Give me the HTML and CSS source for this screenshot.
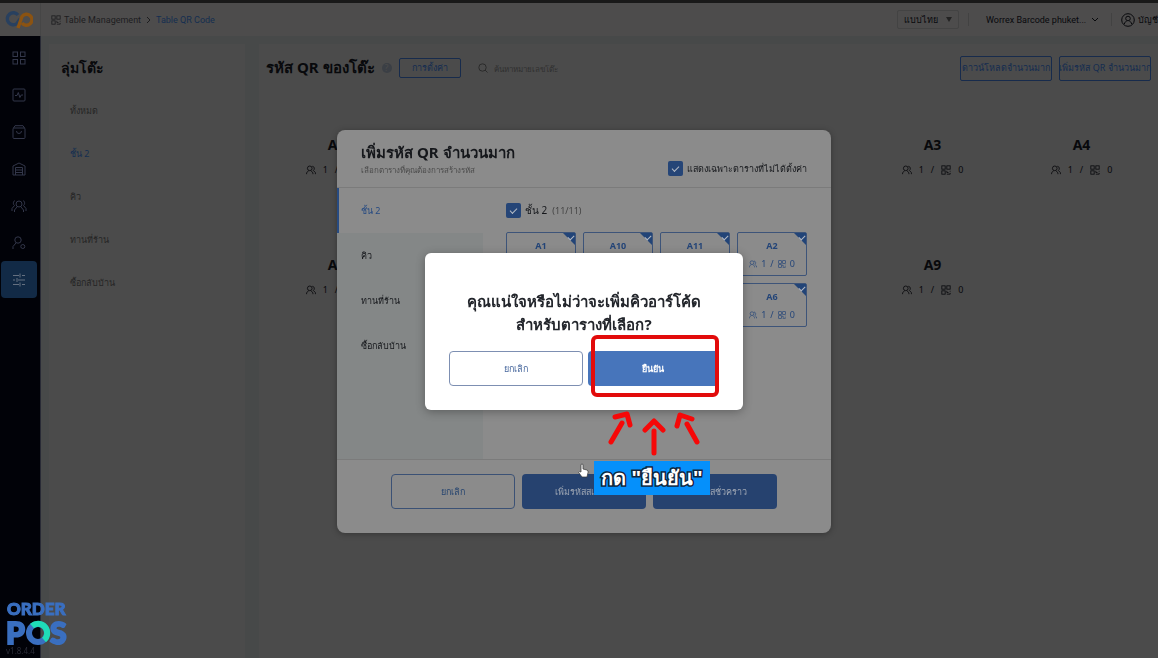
FILE: index.html
```html
<!DOCTYPE html>
<html lang="th">
<head>
  <meta charset="utf-8">
  <title>Table QR Code</title>
  <link rel="stylesheet" href="styles.css">
</head>
<body>
  <svg class="sprite" aria-hidden="true">
    <symbol id="people" viewBox="0 0 12 12">
      <circle cx="4.5" cy="4" r="2.8"/><path d="M.7 11V9.5L3 6.8M8.3 11V9.5L6 6.8M7.5 1.5a2.7 2.7 0 0 1 1.2 5L11.3 9v2"/>
    </symbol>
    <symbol id="qr" viewBox="0 0 12 12">
      <rect x="1" y="1" width="4" height="4"/><rect x="7" y="1" width="4" height="4"/><rect x="1" y="7" width="4" height="4"/><path d="M7 7v2h2M11 7v1M7 11h4V9.5"/>
    </symbol>
  </svg>

  <header class="topbar">
    <a class="brand" href="#" aria-label="Home">
      <svg width="28" height="20" viewBox="0 0 28 20" fill="none" stroke-width="3.4">
        <path d="M13 5A6 6 0 1 0 12 13.500L15 9" stroke="#28405f"/>
        <path d="M13 18L17 6.500A5.500 5.500 0 1 1 17 13" stroke="#8b5312"/>
      </svg>
    </a>
    <nav class="breadcrumb">
      <svg class="line-icon" width="10" height="10"><use href="#qr"/></svg>
      <a href="#">Table Management</a>
      <svg class="line-icon" width="5" height="8" viewBox="0 0 5 8"><path d="M1 1l3 3-3 3"/></svg>
      <a class="current" href="#">Table QR Code</a>
    </nav>
    <div class="account">
      <div class="language"><select aria-label="ภาษา"><option>แบบไทย</option></select></div>
      <span class="divider"></span>
      <button class="store" type="button">Worrex Barcode phuket...
        <svg class="line-icon" width="8" height="6" viewBox="0 0 8 6"><path d="M1 1l3 3 3-3"/></svg>
      </button>
      <span class="divider"></span>
      <button class="user" type="button">
        <svg class="line-icon" width="14" height="14" viewBox="0 0 14 14"><circle cx="7" cy="7" r="6.300"/><circle cx="7" cy="5.500" r="2.300"/><path d="M3.500 11V10L5.500 8M10.500 11V10L8.500 8"/></svg>
        บัญชี
      </button>
    </div>
  </header>

  <div class="layout">
    <nav class="sidebar">
      <a href="#" aria-label="Dashboard"><svg width="14" height="14" viewBox="0 0 14 14"><rect x="1" y="1" width="4.500" height="4.500"/><rect x="8.500" y="1" width="4.500" height="4.500"/><rect x="1" y="8.500" width="4.500" height="4.500"/><rect x="8.500" y="8.500" width="4.500" height="4.500"/></svg></a>
      <a href="#" aria-label="Activity"><svg width="14" height="14" viewBox="0 0 14 14"><rect x="1" y="1" width="12" height="12" rx="1"/><path d="M3 7.500h2l1.300-3 1.600 5L9.200 7H11"/></svg></a>
      <a href="#" aria-label="Orders"><svg width="14" height="14" viewBox="0 0 14 14"><rect x="1" y="3" width="12" height="10.500" rx="1"/><path d="M1.500 3L3 .7h8L12.500 3M4.500 6a2.500 2.500 0 0 0 5 0"/></svg></a>
      <a href="#" aria-label="Stock"><svg width="14" height="14" viewBox="0 0 14 14"><path d="M1 13V4l6-3 6 3v9zM3.500 13V5.500h7V13M3.500 8h7M3.500 10.500h7"/></svg></a>
      <a href="#" aria-label="Members"><svg width="16" height="14" viewBox="0 0 16 14"><circle cx="8" cy="5" r="3"/><path d="M3.500 13v-2L6 8M12.500 13v-2L10 8M4 1.500C1.800 2.500 2 5.500 3.500 6.500L1 9.500V12M12 1.500c2.200 1 2 4 .5 5L15 9.500V12"/></svg></a>
      <a href="#" aria-label="Staff"><svg width="14" height="14" viewBox="0 0 14 14"><circle cx="6" cy="4" r="3.200"/><path d="M1 13v-2.500L4 7"/><circle cx="10.800" cy="10.500" r="2"/></svg></a>
      <a class="active" href="#" aria-label="Settings"><svg width="14" height="14" viewBox="0 0 14 14"><path d="M1 2.500h6M10 2.500h3M8 .5v4M1 7h2M6 7h7M5 5v4M1 11.500h6M10 11.500h3M8 9.500v4"/></svg></a>
    </nav>

    <aside class="groups">
      <h2>ลุ่มโต๊ะ</h2>
      <a href="#">ทั้งหมด</a>
      <a class="active" href="#">ชั้น 2</a>
      <a href="#">คิว</a>
      <a href="#">ทานที่ร้าน</a>
      <a href="#">ซื้อกลับบ้าน</a>
    </aside>

    <main class="content">
      <div class="toolbar">
        <h1>รหัส QR ของโต๊ะ</h1>
        <span class="help">?</span>
        <button class="outline settings" type="button">การตั้งค่า</button>
        <label class="search">
          <svg class="line-icon" width="10" height="10" viewBox="0 0 10 10"><circle cx="4.500" cy="4.500" r="3.700"/><path d="M7 7l2.500 2.500"/></svg>
          <input type="text" placeholder="ค้นหาหมายเลขโต๊ะ" aria-label="ค้นหาหมายเลขโต๊ะ">
        </label>
        <button class="outline bulk" type="button">ดาวน์โหลดจำนวนมาก</button>
        <button class="outline bulk" type="button">เพิ่มรหัส QR จำนวนมาก</button>
      </div>
      <div class="tables" id="tables"></div>
    </main>
  </div>

  <div class="overlay">
    <section class="modal">
      <div class="modal-head">
        <div>
          <h2>เพิ่มรหัส QR จำนวนมาก</h2>
          <p>เลือกตารางที่คุณต้องการสร้างรหัส</p>
        </div>
        <label class="check"><input type="checkbox" checked>แสดงเฉพาะตารางที่ไม่ได้ตั้งค่า</label>
      </div>
      <div class="modal-body">
        <nav class="floors">
          <a class="active" href="#">ชั้น 2</a>
          <a href="#">คิว</a>
          <a href="#">ทานที่ร้าน</a>
          <a href="#">ซื้อกลับบ้าน</a>
        </nav>
        <div class="picker">
          <label class="check"><input type="checkbox" checked>ชั้น 2 <span class="count">(11/11)</span></label>
          <div class="picks" id="picks"></div>
        </div>
      </div>
      <div class="modal-foot">
        <button class="cancel" type="button">ยกเลิก</button>
        <button class="primary" type="button">เพิ่มรหัสสแตติก</button>
        <button class="primary" type="button">เพิ่มรหัสชั่วคราว</button>
      </div>
    </section>
  </div>

  <div class="overlay">
    <section class="dialog" role="dialog" aria-labelledby="question">
      <h2 id="question">คุณแน่ใจหรือไม่ว่าจะเพิ่มคิวอาร์โค้ด<br>สำหรับตารางที่เลือก?</h2>
      <div class="dialog-buttons">
        <button class="cancel" type="button">ยกเลิก</button>
        <button class="confirm" type="button">ยืนยัน</button>
      </div>
      <div class="highlight"></div>
      <svg class="arrows" width="96" height="46" viewBox="0 0 96 46">
        <path d="M7 31L18 12M11 6L23 3L26 14M50 42V20M41 19L50 10L59 19M83 13L93 31M73 15L76 4L88 8"/>
      </svg>
      <svg class="pointer" width="11" height="15" viewBox="0 0 11 15">
        <path d="M3 1.500q1-1 2 0V6l4 1q1.500.5 1 2.500L9 14H4L.7 9.500Q1 8 3 9z" fill="#fff" stroke="#333" stroke-width=".7"/>
      </svg>
      <div class="callout">กด "ยืนยัน"</div>
    </section>
  </div>

  <div class="watermark">
    <small>v1.8.4.4</small>
    <svg width="66" height="46" viewBox="0 0 66 46">
      <text class="order" x="1" y="15">ORDER</text>
      <text class="pos" x="0" y="44">P</text>
      <circle cx="32" cy="33" r="9" fill="none" stroke="#3a6fc0" stroke-width="6"/>
      <path d="M26 26A9 9 0 0 1 38 40" fill="none" stroke="#1fdcb8" stroke-width="6"/>
      <text class="pos" x="44" y="44">S</text>
    </svg>
  </div>

  <script>
    const seats = '<div class="seats"><svg class="line-icon"><use href="#people"/></svg><span>1</span><span>/</span><svg class="line-icon"><use href="#qr"/></svg><span>0</span></div>';
    const names = ['A1', 'A10', 'A11', 'A2', 'A3', 'A4', 'A5', 'A6', 'A7', 'A8', 'A9'];

    document.getElementById('tables').innerHTML = names
      .map(name => `<div class="table-card"><h3>${name}</h3>${seats}</div>`).join('');
    document.getElementById('picks').innerHTML = names
      .map(name => `<button class="pick" type="button" aria-pressed="true"><b>${name}</b>${seats}</button>`).join('');
  </script>
</body>
</html>
```

FILE: styles.css
```css
* {
  box-sizing: border-box;
}

body {
  margin: 0;
  min-height: 100vh;
  display: flex;
  flex-direction: column;
  overflow: hidden;
  background: #474949;
  border-top: 3px solid #191919;
  color: #08090c;
  font-family: "Noto Sans", "Open Sans", sans-serif;
  font-size: 9px;
}

h1, h2, h3, p {
  margin: 0;
}

a {
  color: inherit;
  text-decoration: none;
}

button, input, select {
  font: inherit;
  color: inherit;
  background: transparent;
  border: none;
  padding: 0;
  white-space: nowrap;
}

.sprite {
  position: absolute;
  width: 0;
  height: 0;
}

.line-icon, .sidebar svg {
  fill: none;
  stroke: currentColor;
  stroke-width: 1;
  flex-shrink: 0;
}

/* top bar */
.topbar {
  display: flex;
  align-items: center;
  height: 33px;
  background: #4d4c4c;
  font-family: Roboto, "Noto Sans", sans-serif;
}

.brand {
  display: flex;
  align-items: center;
  justify-content: center;
  width: 41px;
  height: 33px;
  padding-right: 2px;
  border-right: 1px solid #464646;
}

.breadcrumb {
  display: flex;
  align-items: center;
  gap: 5px;
  margin-left: 10px;
  color: #1d1d1f;
}

.breadcrumb a {
  line-height: 12px;
}

.breadcrumb .line-icon {
  margin-right: -2px;
}

.breadcrumb .current {
  margin-left: 2px;
  color: #142e50;
}

.account {
  display: flex;
  align-items: center;
  margin-left: auto;
  white-space: nowrap;
  width: 261px;
}

.language {
  display: flex;
  align-items: center;
  width: 62px;
  height: 19px;
  padding: 0 6px;
  border: 1px solid #434343;
  border-radius: 2px;
}

.language select {
  appearance: none;
  flex: 1;
}

.language::after {
  content: "";
  border: 3px solid transparent;
  border-top: 5px solid #232323;
  border-bottom: none;
}

.divider {
  width: 1px;
  height: 13px;
  margin: 0 9px;
  background: #424242;
}

.store {
  display: flex;
  align-items: center;
  gap: 5px;
  width: 124px;
  padding-left: 8px;
}

.user {
  display: flex;
  align-items: center;
  gap: 3px;
}

/* page */
.layout {
  display: flex;
  flex: 1;
}

.sidebar {
  width: 41px;
  padding: 3px 3px 0 1px;
  background: #010208;
  border-right: 1px solid #292b36;
}

.sidebar a {
  display: flex;
  align-items: center;
  justify-content: center;
  height: 37px;
  color: #33374a;
  border-radius: 4px;
}

.sidebar a.active {
  background: #122a46;
  color: #657080;
}

.groups {
  display: flex;
  flex-direction: column;
  width: 196px;
  margin: 8px 14px 0 8px;
  padding: 8px 12px;
  background: #4b4b4b;
  color: #252525;
}

.groups h2 {
  height: 32px;
  line-height: 32px;
  margin-bottom: 5px;
  color: #08090c;
  font-size: 14px;
}

.groups a {
  height: 43px;
  line-height: 43px;
  padding-left: 9px;
}

.groups a.active {
  color: #142e50;
}

.content {
  flex: 1;
  min-width: 0;
  margin-top: 8px;
  padding: 8px 7px;
  background: #4b4b4b;
}

.toolbar {
  display: flex;
  align-items: center;
  gap: 7px;
  height: 32px;
}

.toolbar h1 {
  font-size: 15px;
  white-space: nowrap;
}

.help {
  width: 10px;
  height: 10px;
  line-height: 10px;
  border-radius: 50%;
  background: #3b3f45;
  text-align: center;
  color: #4b4b4b;
}

.outline {
  display: flex;
  align-items: center;
  justify-content: center;
  border: 1px solid #172b4c;
  border-radius: 2px;
  color: #142c50;
}

.settings {
  width: 62px;
  height: 20px;
}

.search {
  display: flex;
  align-items: center;
  gap: 6px;
  margin: 0 auto 0 10px;
  color: #2b2b2b;
}

.search input {
  width: 110px;
  font-size: 8px;
}

.search input::placeholder {
  color: #303030;
}

.bulk {
  width: 92px;
  height: 25px;
}

.tables {
  display: grid;
  grid-template-columns: repeat(6, 149px);
  grid-auto-rows: 120px;
  margin: 24px -7px 0 -4px;
}

.table-card {
  padding: 27px 0 0;
  text-align: center;
}

.table-card h3 {
  font-size: 14px;
  line-height: 20px;
}

.seats {
  display: flex;
  align-items: center;
  justify-content: center;
  gap: 7px;
  line-height: 12px;
}

.seats svg {
  width: 10px;
  height: 10px;
}

.table-card .seats {
  margin-top: 9px;
}

/* bulk modal */
.overlay {
  position: fixed;
  inset: 5px 0 0 10px;
  display: flex;
  align-items: center;
  justify-content: center;
}

.modal {
  width: 494px;
  background: #8b8b8b;
  border-radius: 8px;
  box-shadow: 0 1px 6px rgba(0, 0, 0, 0.3);
  overflow: hidden;
  color: #15171b;
}

.modal-head {
  display: flex;
  justify-content: space-between;
  height: 58px;
  padding: 11px 24px 0;
  border-bottom: 1px solid #7b7b7b;
}

.modal-head h2 {
  font-size: 15px;
  line-height: 22px;
}

.modal-head p {
  font-size: 8px;
  line-height: 14px;
  color: #4b4b4b;
}

.check {
  display: flex;
  align-items: center;
  gap: 4px;
}

.modal-head .check {
  align-self: flex-start;
  margin-top: 20px;
}

.check input {
  appearance: none;
  display: flex;
  justify-content: center;
  width: 15px;
  height: 15px;
  margin: 0;
  padding-top: 5px;
  border-radius: 2px;
  background: #254577;
}

.check input::after,
.pick::after {
  content: "";
  width: 6px;
  height: 3px;
  border: solid #b4bac4;
  border-width: 0 0 1px 1px;
  transform: rotate(-45deg);
}

.modal-body {
  display: flex;
  height: 271px;
}

.floors {
  width: 146px;
  background: #848787;
}

.floors a {
  display: block;
  height: 45px;
  line-height: 45px;
  padding-left: 24px;
}

.floors a.active {
  padding-left: 22px;
  border-left: 2px solid #274b82;
  background: #8b8b8b;
  color: #264a82;
}

.picker {
  flex: 1;
  padding: 15px 24px 0 23px;
}

.picker .check {
  height: 15px;
  font-size: 10px;
}

.count {
  margin-left: 1px;
  color: #3d3d3d;
  font-size: 9px;
  font-family: "Open Sans", sans-serif;
}

.picks {
  display: grid;
  grid-template-columns: repeat(4, 1fr);
  gap: 7px;
  margin-top: 14px;
}

.pick {
  position: relative;
  height: 44px;
  border: 1px solid #3d5479;
  border-radius: 2px;
  color: #244578;
}

.pick b {
  display: block;
  line-height: 15px;
}

.pick .seats {
  gap: 4px;
  margin-top: 5px;
}

.pick .seats svg {
  width: 8px;
  height: 8px;
}

.pick::before {
  content: "";
  position: absolute;
  top: 0;
  right: 0;
  border-top: 12px solid #224477;
  border-left: 12px solid transparent;
}

.pick::after {
  position: absolute;
  top: 2px;
  right: 1px;
  width: 5px;
}

.modal-foot {
  display: flex;
  justify-content: center;
  gap: 7px;
  padding: 14px 0 24px;
  border-top: 1px solid #7b7b7b;
}

.modal-foot button {
  width: 124px;
  height: 35px;
  border-radius: 4px;
}

.modal-foot .cancel {
  border: 1px solid #3b5175;
  color: #284670;
}

.modal-foot .primary {
  background: #26426f;
  color: #9fa7b4;
}

/* confirm dialog */
.dialog {
  position: relative;
  width: 318px;
  padding: 37px 24px 24px;
  background: #fff;
  border-radius: 6px;
  box-shadow: 0 2px 10px rgba(0, 0, 0, 0.3);
}

.dialog h2 {
  color: #22252b;
  font-size: 15px;
  line-height: 23px;
  text-align: center;
  white-space: nowrap;
}

.dialog-buttons {
  display: flex;
  gap: 5px;
  margin-top: 15px;
}

.dialog-buttons button {
  flex: 1;
  height: 35px;
  border-radius: 4px;
}

.dialog-buttons .cancel {
  border: 1px solid #7d8fb2;
  color: #49699e;
}

.dialog-buttons .confirm {
  background: #4775bb;
  color: #fff;
  font-weight: bold;
}

.highlight {
  position: absolute;
  right: 24px;
  bottom: 13px;
  width: 128px;
  height: 62px;
  border: 4px solid #e20b0b;
  border-radius: 6px;
}

.arrows {
  position: absolute;
  top: 158px;
  left: 179px;
  fill: none;
  stroke: #f60808;
  stroke-width: 5;
  stroke-linecap: round;
  stroke-linejoin: round;
}

.pointer {
  position: absolute;
  top: 210px;
  left: 153px;
}

.callout {
  position: absolute;
  top: 208px;
  left: 169px;
  width: 116px;
  height: 34px;
  line-height: 34px;
  background: #0590fb;
  color: #fff;
  font-size: 20px;
  font-weight: bold;
  text-align: center;
  white-space: nowrap;
  -webkit-text-stroke: 3px #10243c;
  paint-order: stroke fill;
}

/* logo in the page corner */
.watermark {
  position: fixed;
  left: 6px;
  bottom: 3px;
  display: flex;
  flex-direction: column-reverse;
  color: #2b2d38;
}

.watermark small {
  font-size: 8px;
  line-height: 9px;
}

.watermark text {
  fill: #3a6fc0;
  stroke: #3a6fc0;
  font-family: Lato, sans-serif;
  font-weight: 900;
}

.watermark .order {
  font-size: 17px;
}

.watermark .pos {
  font-size: 30px;
  stroke-width: 2;
}
```
